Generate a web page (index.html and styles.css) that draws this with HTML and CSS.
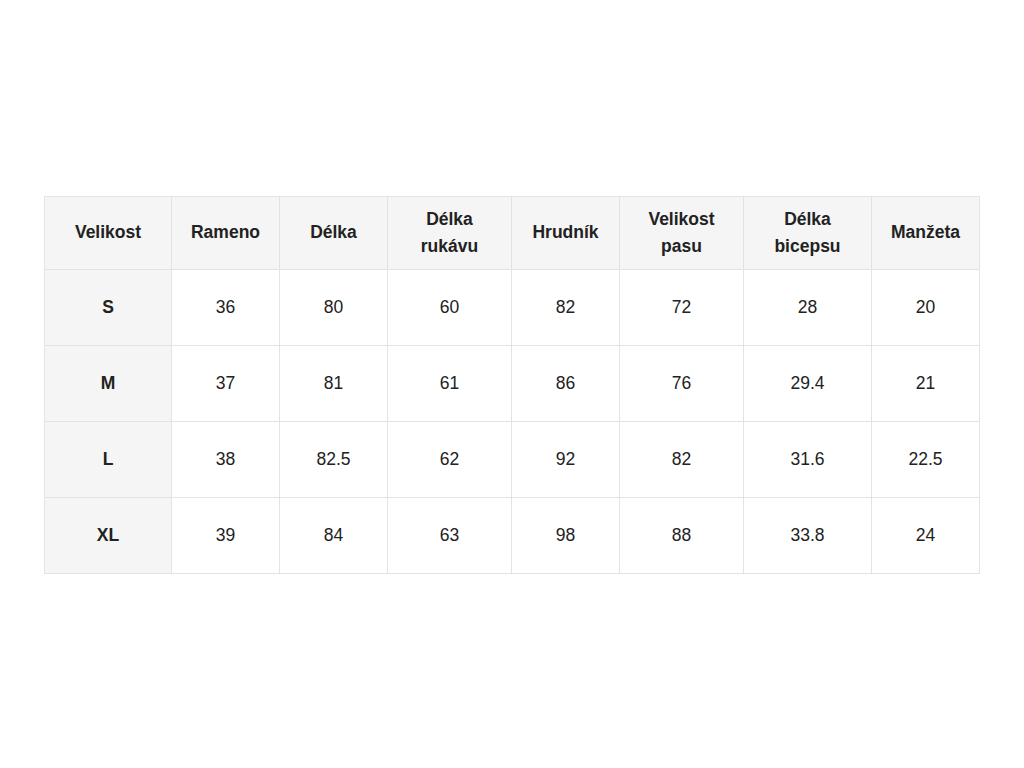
FILE: index.html
```html
<!DOCTYPE html>
<html lang="cs">
<head>
<meta charset="utf-8">
<title>Tabulka velikostí</title>
<link rel="stylesheet" href="styles.css">
</head>
<body>
<main class="page">
<table class="sizes">
<colgroup>
<col class="c1"><col class="c2"><col class="c3"><col class="c4"><col class="c5"><col class="c6"><col class="c7"><col class="c8">
</colgroup>
<thead>
<tr>
<th>Velikost</th><th>Rameno</th><th>Délka</th><th>Délka<br>rukávu</th><th>Hrudník</th><th>Velikost<br>pasu</th><th>Délka<br>bicepsu</th><th>Manžeta</th>
</tr>
</thead>
<tbody>
<tr><th>S</th><td>36</td><td>80</td><td>60</td><td>82</td><td>72</td><td>28</td><td>20</td></tr>
<tr><th>M</th><td>37</td><td>81</td><td>61</td><td>86</td><td>76</td><td>29.4</td><td>21</td></tr>
<tr><th>L</th><td>38</td><td>82.5</td><td>62</td><td>92</td><td>82</td><td>31.6</td><td>22.5</td></tr>
<tr><th>XL</th><td>39</td><td>84</td><td>63</td><td>98</td><td>88</td><td>33.8</td><td>24</td></tr>
</tbody>
</table>
</main>
</body>
</html>
```
FILE: styles.css
```css
html, body {
  margin: 0;
  padding: 0;
  background: #ffffff;
}
.page {
  min-height: 100vh;
  display: flex;
  align-items: center;
  justify-content: center;
  font-family: "Liberation Sans", Arial, sans-serif;
  color: #222222;
}
.sizes {
  border-collapse: collapse;
  table-layout: fixed;
  width: 935px;
  font-size: 17.5px;
  line-height: 27px;
  text-align: center;
  margin-top: 1px;
}
.c1 { width: 127px; }
.c2 { width: 108px; }
.c3 { width: 108px; }
.c4 { width: 124px; }
.c5 { width: 108px; }
.c6 { width: 124px; }
.c7 { width: 128px; }
.c8 { width: 108px; }
.sizes th,
.sizes td {
  border: 1px solid #e3e3e3;
  padding: 24px 4px;
  vertical-align: middle;
}
.sizes th {
  font-weight: bold;
  background: #f5f5f5;
}
.sizes thead th {
  padding: 9px 4px;
}
.sizes td {
  background: #ffffff;
  font-weight: normal;
}
```
